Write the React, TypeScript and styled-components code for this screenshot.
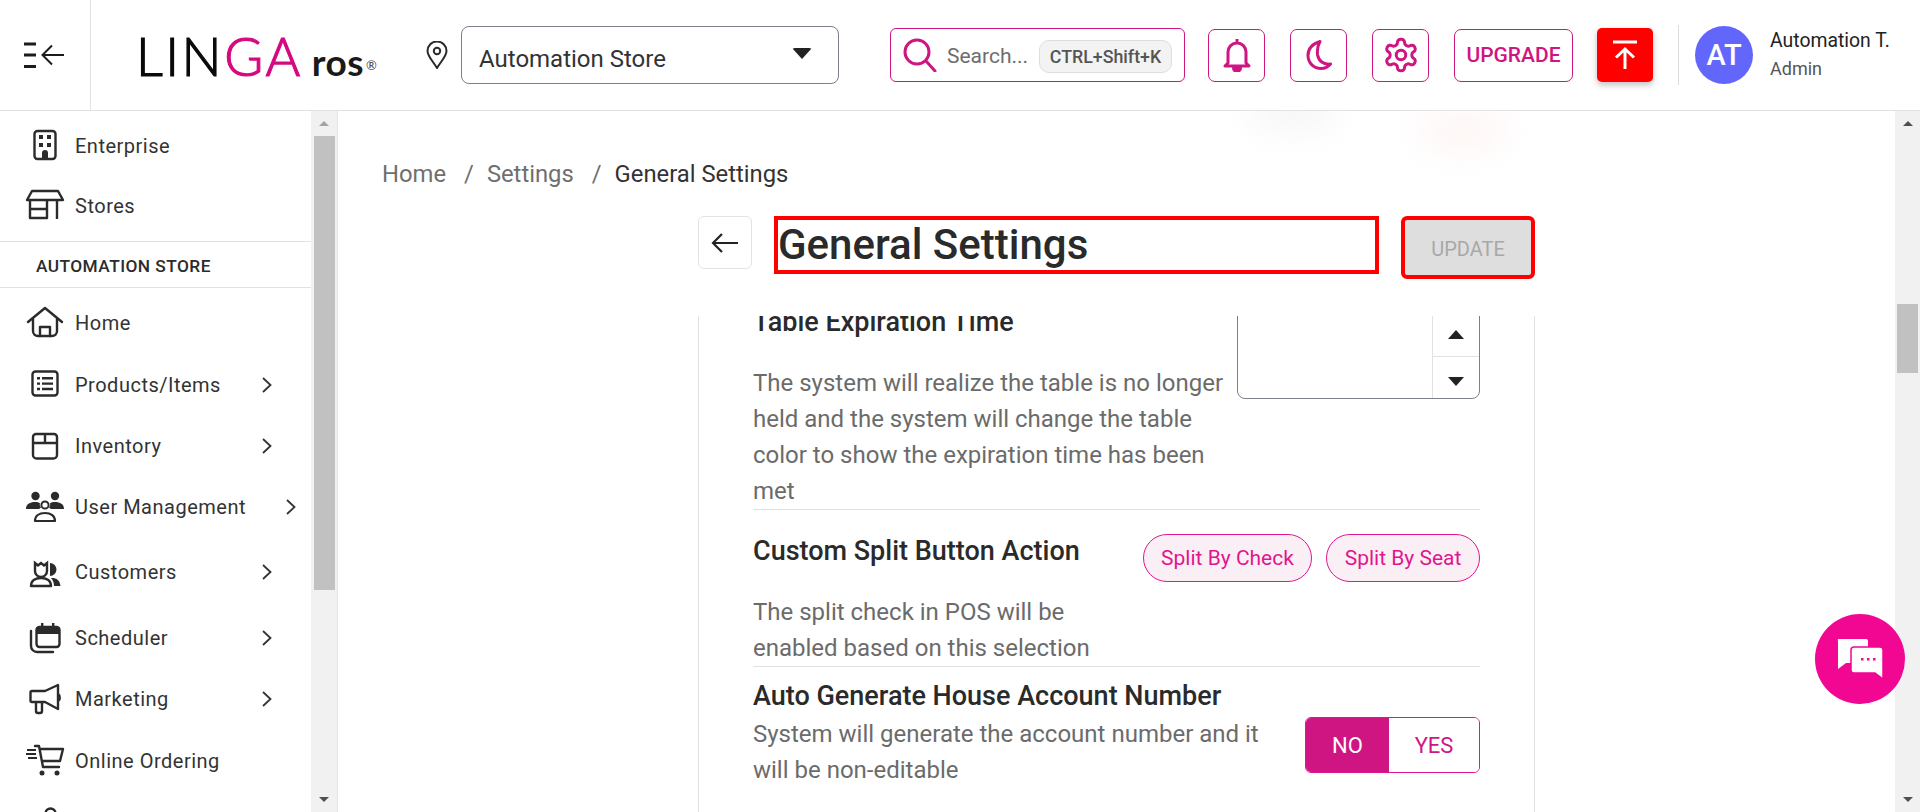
import { ReactElement, ReactNode } from 'react'
import styled, { createGlobalStyle } from 'styled-components'

const pink = '#cf1582'

const GlobalStyle = createGlobalStyle`
  html, body {
    margin: 0;
    height: 100%;
    overflow: hidden;
    background: #fff;
    font-family: Roboto, "Liberation Sans", sans-serif;
    color: #222;
  }
  * { box-sizing: border-box; }
`

const Page = styled.div`
  width: 1920px;
  height: 812px;
  display: flex;
  flex-direction: column;
  overflow: hidden;
`

const Header = styled.header`
  flex: none;
  height: 111px;
  display: flex;
  align-items: center;
  border-bottom: 1px solid #e2e2e2;
  background: #fff;
`

const MenuCell = styled.div`
  flex: none;
  width: 91px;
  height: 110px;
  border-right: 1px solid #e2e2e2;
  display: flex;
  align-items: center;
  padding-left: 24px;
`

const Logo = styled.div`
  flex: none;
  width: 290px;
  margin-left: 45px;
  display: flex;
  align-items: baseline;
  height: 54px;
  font-family: Lato, Roboto, sans-serif;
  line-height: 54px;
  margin-top: 2px;
`

const LogoWord = styled.span<{ $pink?: boolean }>`
  font-size: 53px;
  font-weight: 300;
  letter-spacing: 2.5px;
  color: ${p => (p.$pink ? '#d6097f' : '#0a0a0a')};
  -webkit-text-stroke: 1.2px currentColor;
`

const LogoRos = styled.span`
  font-size: 37px;
  font-weight: 700;
  margin-left: 9px;
  color: #1a1a1a;
  letter-spacing: 0.5px;
`

const LogoMark = styled.sup`
  font-size: 13px;
  line-height: 0;
  color: #444;
  margin-left: 2px;
  position: relative;
  top: -6px;
`

const PinIcon = styled.svg`
  flex: none;
  width: 22px;
  height: 28px;
  margin-right: 13px;
`

const StoreSelect = styled.div`
  flex: none;
  width: 378px;
  height: 58px;
  border: 1px solid #7c808c;
  border-radius: 8px;
  display: flex;
  align-items: center;
  justify-content: space-between;
  padding: 8px 26px 0 17px;
  font-size: 24px;
  color: #333;
`

const CaretDown = styled.span`
  width: 0;
  height: 0;
  margin-bottom: 12px;
  border-left: 10px solid transparent;
  border-right: 10px solid transparent;
  border-top: 11px solid #222;
  border-radius: 3px;
`

const SearchBox = styled.div`
  flex: none;
  width: 295px;
  height: 54px;
  margin-left: 51px;
  margin-right: 23px;
  border: 1px solid ${pink};
  border-radius: 6px;
  display: flex;
  align-items: center;
  padding-left: 12px;
  font-size: 21px;
  color: #6d6d6d;
`

const SearchText = styled.span`
  margin: 2px 0 0 10px;
  width: 92px;
  flex: none;
`

const Kbd = styled.span`
  flex: none;
  width: 133px;
  height: 33px;
  border: 1px solid #dedede;
  border-radius: 10px;
  background: #f3f3f3;
  display: flex;
  align-items: center;
  justify-content: center;
  font-size: 17.8px;
  font-weight: 500;
  color: #555;
  margin-top: 2px;
`

const HeadButton = styled.div<{ $w?: number }>`
  flex: none;
  width: ${p => p.$w ?? 57}px;
  height: 53px;
  margin-right: 25px;
  border: 1px solid ${pink};
  border-radius: 7px;
  color: ${pink};
  display: flex;
  align-items: center;
  justify-content: center;
  font-size: 21px;
  font-weight: 500;
`

const RedButton = styled.div`
  flex: none;
  width: 56px;
  height: 54px;
  margin-left: -1px;
  border-radius: 5px;
  background: #ff0000;
  box-shadow: 0 3px 6px rgba(0, 0, 0, 0.25);
  display: flex;
  align-items: center;
  justify-content: center;
`

const HeadDivider = styled.div`
  flex: none;
  width: 1px;
  height: 60px;
  margin: 0 16px 0 25px;
  background: #dcdcdc;
`

const Avatar = styled.div`
  flex: none;
  width: 58px;
  height: 58px;
  border-radius: 50%;
  background: #6366fb;
  color: #fff;
  display: flex;
  align-items: center;
  justify-content: center;
  font-size: 29px;
  font-weight: 500;
`

const UserBox = styled.div`
  margin-left: 17px;
  display: flex;
  flex-direction: column;
  gap: 4px;
`

const UserName = styled.div`
  font-size: 19.4px;
  line-height: 24px;
  color: #222;
`

const UserRole = styled.div`
  font-size: 18px;
  line-height: 24px;
  color: #555;
`

const Body = styled.div`
  flex: 1;
  min-height: 0;
  display: flex;
`

const Sidebar = styled.aside`
  flex: none;
  width: 338px;
  display: flex;
  border-right: 1px solid #e4e4e4;
`

const Nav = styled.nav`
  flex: none;
  width: 311px;
  padding-top: 5px;
  overflow: hidden;
`

const NavRow = styled.div<{ $h: number }>`
  height: ${p => p.$h}px;
  display: flex;
  align-items: center;
  padding-left: 25px;
  font-size: 20px;
  color: #333;
`

const NavIcon = styled.svg`
  flex: none;
  width: 40px;
  height: 40px;
  margin-right: 10px;
  color: #2b2b2b;
`

const NavLabel = styled.span<{ $wide?: boolean }>`
  flex: none;
  width: ${p => (p.$wide ? 210 : 186)}px;
  letter-spacing: 0.5px;
`

const NavSection = styled.div`
  height: 47px;
  margin-top: 5px;
  padding: 2px 0 0 36px;
  border-top: 1px solid #e2e2e2;
  border-bottom: 1px solid #e2e2e2;
  display: flex;
  align-items: center;
  font-size: 17.3px;
  font-weight: 500;
  letter-spacing: 0.45px;
  color: #2b2b2b;
`

const Track = styled.div<{ $w: number }>`
  flex: none;
  width: ${p => p.$w}px;
  display: flex;
  flex-direction: column;
  align-items: center;
  background: #f1f1f1;
`

const Arrow = styled.div<{ $h: number; $down?: boolean; $dim?: boolean }>`
  flex: none;
  height: ${p => p.$h}px;
  display: flex;
  align-items: center;
  justify-content: center;
  &::before {
    content: '';
    border-left: 5.5px solid transparent;
    border-right: 5.5px solid transparent;
    ${p => (p.$down ? 'border-top' : 'border-bottom')}: 5.5px solid ${p => (p.$dim ? '#a3a3a3' : '#505050')};
  }
`

const Thumb = styled.div<{ $h: number; $gap: number }>`
  flex: none;
  width: 21px;
  height: ${p => p.$h}px;
  margin-top: ${p => p.$gap}px;
  background: #c1c1c1;
`

const TrackFill = styled.div`
  flex: 1;
`

const Main = styled.main`
  flex: 1;
  min-width: 0;
  display: flex;
  flex-direction: column;
  position: relative;
  overflow: hidden;
  padding-top: 48px;
`

const Smudge = styled.div<{ $x: number; $y: number; $tint: string }>`
  position: absolute;
  left: ${p => p.$x}px;
  top: ${p => p.$y}px;
  width: 90px;
  height: 40px;
  border-radius: 50%;
  background: ${p => p.$tint};
  filter: blur(16px);
`

const Breadcrumb = styled.div`
  flex: none;
  height: 30px;
  padding-left: 44px;
  display: flex;
  align-items: center;
  font-size: 23.8px;
  color: #6f6f6f;
`

const Crumb = styled.span<{ $current?: boolean }>`
  color: ${p => (p.$current ? '#333' : '#6f6f6f')};
`

const CrumbSlash = styled.span`
  margin: 0 13px 0 18px;
`

const TitleBar = styled.div`
  flex: none;
  height: 100px;
  margin-top: 27px;
  padding-left: 360px;
  display: flex;
  align-items: flex-start;
`

const BackButton = styled.div`
  flex: none;
  width: 54px;
  height: 53px;
  margin-right: 22px;
  border: 1px solid #e3e3e3;
  border-radius: 6px;
  display: flex;
  align-items: center;
  justify-content: center;
`

const TitleBox = styled.h1`
  flex: none;
  width: 605px;
  height: 58px;
  margin: 0 22px 0 0;
  border: 4px solid #ff0000;
  font-size: 42px;
  line-height: 50px;
  font-weight: 500;
  color: #2a2a2a;
`

const UpdateButton = styled.div`
  flex: none;
  width: 134px;
  height: 63px;
  border: 4px solid #ff0000;
  border-radius: 6px;
  background: #dedede;
  color: #a8a8a8;
  font-size: 20px;
  display: flex;
  align-items: center;
  justify-content: center;
  padding-top: 2px;
`

const Card = styled.section`
  flex: 1;
  min-height: 0;
  width: 837px;
  margin-left: 360px;
  padding: 0 54px;
  border-left: 1px solid #e2e2e2;
  border-right: 1px solid #e2e2e2;
  overflow: hidden;
`

const SettingRow = styled.div<{ $clip?: number; $pad?: number; $last?: boolean }>`
  display: flex;
  justify-content: space-between;
  align-items: flex-start;
  margin-top: ${p => p.$clip ?? 0}px;
  padding-top: ${p => p.$pad ?? 0}px;
  border-bottom: ${p => (p.$last ? 'none' : '1px solid #e0e0e6')};
`

const SettingText = styled.div<{ $w: number }>`
  flex: none;
  width: ${p => p.$w}px;
`

const SettingTitle = styled.div<{ $gap?: number }>`
  font-size: 27px;
  line-height: 40px;
  font-weight: 500;
  color: #2a2a2a;
  margin-bottom: ${p => p.$gap ?? 0}px;
  white-space: nowrap;
`

const SettingHelp = styled.div`
  font-size: 24px;
  line-height: 36px;
  color: #6b6b6b;
`

const NumberInput = styled.div`
  flex: none;
  width: 243px;
  height: 97px;
  border: 1px solid #7c808c;
  border-radius: 0 0 8px 8px;
  display: flex;
  justify-content: flex-end;
`

const Spinner = styled.div`
  width: 47px;
  border-left: 1px solid #e2e2e2;
  display: flex;
  flex-direction: column;
`

const SpinStep = styled.div<{ $down?: boolean }>`
  flex: none;
  height: ${p => (p.$down ? 43 : 53)}px;
  display: flex;
  align-items: center;
  justify-content: center;
  padding-top: ${p => (p.$down ? 6 : 10)}px;
  ${p => (p.$down ? 'border-top: 1px solid #e2e2e2;' : '')}
  &::before {
    content: '';
    border-left: 8px solid transparent;
    border-right: 8px solid transparent;
    ${p => (p.$down ? 'border-top' : 'border-bottom')}: 9px solid #222;
  }
`

const PillGroup = styled.div`
  display: flex;
  gap: 14px;
  margin-top: 3px;
`

const Pill = styled.div<{ $w: number }>`
  width: ${p => p.$w}px;
  height: 48px;
  border: 1px solid #e0168e;
  border-radius: 24px;
  background: #fbeff6;
  color: #e0168e;
  font-size: 21px;
  display: flex;
  align-items: center;
  justify-content: center;
`

const Toggle = styled.div`
  flex: none;
  display: flex;
  width: 175px;
  height: 56px;
  margin-top: 41px;
  border: 1px solid #e0168e;
  border-radius: 6px;
  overflow: hidden;
`

const ToggleOption = styled.div<{ $on?: boolean; $w: number }>`
  width: ${p => p.$w}px;
  background: ${p => (p.$on ? pink : '#fff')};
  color: ${p => (p.$on ? '#fff' : pink)};
  font-size: 22px;
  display: flex;
  align-items: center;
  justify-content: center;
`

const ChatButton = styled.div`
  position: absolute;
  left: 1815px;
  top: 614px;
  width: 90px;
  height: 90px;
  border-radius: 50%;
  background: #f10791;
  display: flex;
  align-items: center;
  justify-content: center;
`

const icons: Record<string, ReactNode> = {
  enterprise: (
    <>
      <rect x="9.5" y="5" width="21" height="28" rx="3" fill="none" stroke="currentColor" strokeWidth="2.4" />
      <path d="M14 9h4v4h-4zM22 9h4v4h-4zM14 17h4v4h-4zM22 17h4v4h-4zM17 33v-6a3 3 0 0 1 6 0v6z" fill="currentColor" />
    </>
  ),
  stores: (
    <g fill="none" stroke="currentColor" strokeWidth="2.4" strokeLinejoin="round">
      <path d="M7 5h26l5 9H2z" />
      <path d="M5 14v18h17V14M5 23h17M32 14v19" />
    </g>
  ),
  home: (
    <g fill="none" stroke="currentColor" strokeWidth="2.4" strokeLinecap="round" strokeLinejoin="round">
      <path d="M3 19 20 5l17 14" />
      <path d="M8 16v12a5 5 0 0 0 5 5h14a5 5 0 0 0 5-5V16" />
      <path d="M15 33v-9h10v9" />
    </g>
  ),
  products: (
    <>
      <rect x="7.5" y="6.5" width="25" height="24" rx="3" fill="none" stroke="currentColor" strokeWidth="2.4" />
      <path d="M12 12h3v2.4h-3zM17 12h11v2.4H17zM12 17.4h3v2.4h-3zM17 17.4h11v2.4H17zM12 22.8h3v2.4h-3zM17 22.8h11v2.4H17z" fill="currentColor" />
    </>
  ),
  inventory: (
    <g fill="none" stroke="currentColor" strokeWidth="2.4" strokeLinejoin="round">
      <path d="M11 8h18a3 3 0 0 1 3 3v18a3.500 3.500 0 0 1-3.500 3.500h-17A3.500 3.500 0 0 1 8 29V11a3 3 0 0 1 3-3z" />
      <path d="M8 17h24M20 8v9" />
    </g>
  ),
  users: (
    <>
      <circle cx="10.500" cy="9" r="4.200" fill="currentColor" />
      <circle cx="30" cy="9" r="4.200" fill="currentColor" />
      <path d="M1 22c0-5 4-7 9-7 2 0 4 .4 5 1.200-.6 1.500 0 3 1 4.300L14 22zM39 22c0-5-4-7-9-7-2 0-4 .4-5 1.200.6 1.500 0 3-1 4.300l2 1.500z" fill="currentColor" />
      <circle cx="20" cy="18" r="3.600" fill="none" stroke="currentColor" strokeWidth="2" />
      <path d="M10 34c0-5 4-8 10-8s10 3 10 8z" fill="none" stroke="currentColor" strokeWidth="2.200" strokeLinejoin="round" />
    </>
  ),
  customers: (
    <>
      <path d="M10 11l3 2.500 3-2.500 3 2.500 3-2.500v8a6 6 0 0 1-12 0z" fill="none" stroke="currentColor" strokeWidth="2.400" />
      <path d="M25 11a6 6 0 0 1 0 13z" fill="currentColor" />
      <path d="M6 34c0-6 5-8 10-8s10 2 10 8z" fill="none" stroke="currentColor" strokeWidth="2.400" strokeLinejoin="round" />
      <path d="M26 26c5-.5 9 2 9.500 8H29c0-3-1-6-3-8z" fill="currentColor" />
    </>
  ),
  scheduler: (
    <>
      <path d="M6 13v15a6 6 0 0 0 6 6h16" fill="none" stroke="currentColor" strokeWidth="2.400" strokeLinecap="round" />
      <rect x="11.500" y="9" width="23" height="20" rx="3" fill="none" stroke="currentColor" strokeWidth="2.400" />
      <path d="M11.500 9h23v7h-23zM16 5h2.400v5H16zM27 5h2.400v5H27z" fill="currentColor" />
    </>
  ),
  marketing: (
    <g fill="none" stroke="currentColor" strokeWidth="2.400" strokeLinejoin="round">
      <path d="M7 12h13l13-6v24l-13-7H7a1.500 1.500 0 0 1-1.500-1.500v-8A1.500 1.500 0 0 1 7 12z" />
      <path d="M11 23v9a2 2 0 0 0 2 2h2a2 2 0 0 0 2-2v-9M33 15.500c2 .5 2.500 5.500 0 6" />
    </g>
  ),
  online: (
    <>
      <g fill="none" stroke="currentColor" strokeWidth="2.400" strokeLinecap="round" strokeLinejoin="round">
        <path d="M10 5h4l4 21h16M15 8h23l-3 12H17" />
      </g>
      <path d="M2 8h9v2H2zM1 12h10v2H1zM3 16h9v2H3z" fill="currentColor" />
      <circle cx="17" cy="32" r="2.500" fill="currentColor" />
      <circle cx="32" cy="32" r="2.500" fill="currentColor" />
    </>
  ),
  tools: (
    <path d="M22 14a5 5 0 1 1 7 0" fill="none" stroke="currentColor" strokeWidth="2.400" />
  ),
}

const navTop = [
  { icon: 'enterprise', label: 'Enterprise', h: 60 },
  { icon: 'stores', label: 'Stores', h: 60 },
]

const navStore = [
  { icon: 'home', label: 'Home', h: 70 },
  { icon: 'products', label: 'Products/Items', h: 54, more: true },
  { icon: 'inventory', label: 'Inventory', h: 68, more: true },
  { icon: 'users', label: 'User Management', h: 54, more: true, wide: true },
  { icon: 'customers', label: 'Customers', h: 76, more: true },
  { icon: 'scheduler', label: 'Scheduler', h: 56, more: true },
  { icon: 'marketing', label: 'Marketing', h: 66, more: true },
  { icon: 'online', label: 'Online Ordering', h: 58 },
  { icon: 'tools', label: '', h: 66 },
]

function NavItem({ icon, label, h, more, wide }: { icon: string; label: string; h: number; more?: boolean; wide?: boolean }): ReactElement {
  return (
    <NavRow $h={h}>
      <NavIcon viewBox="0 0 40 40">{icons[icon]}</NavIcon>
      <NavLabel $wide={wide}>{label}</NavLabel>
      {more && (
        <svg width="12" height="18" viewBox="0 0 12 18" fill="none" stroke="#333" strokeWidth="1.800">
          <path d="M2 2l7.500 7L2 16" />
        </svg>
      )}
    </NavRow>
  )
}

export default function App(): ReactElement {
  return (
    <Page>
      <GlobalStyle />
      <Header>
        <MenuCell>
          <svg width="41" height="28" viewBox="0 0 41 28" fill="none" stroke="#1c1c1c">
            <path d="M0 3h12M0 14h12M0 25.500h12" strokeWidth="3" />
            <path d="M40 14H19M28 4.500 18.500 14l9.500 9.500" strokeWidth="2" />
          </svg>
        </MenuCell>
        <Logo>
          <LogoWord>LIN</LogoWord>
          <LogoWord $pink>GA</LogoWord>
          <LogoRos>ros</LogoRos>
          <LogoMark>®</LogoMark>
        </Logo>
        <PinIcon viewBox="0 0 22 28" fill="none" stroke="#2a2a2a" strokeWidth="2">
          <path d="M11 27C6 19 1.500 15 1.500 10a9.500 9.500 0 0 1 19 0C20.500 15 16 19 11 27z" />
          <circle cx="11" cy="10" r="3.200" />
        </PinIcon>
        <StoreSelect>
          Automation Store
          <CaretDown />
        </StoreSelect>
        <SearchBox>
          <svg width="34" height="34" viewBox="0 0 34 34" fill="none" stroke={pink} strokeWidth="3" strokeLinecap="round">
            <circle cx="14" cy="14" r="12" />
            <path d="M23 23l9 10" />
          </svg>
          <SearchText>Search...</SearchText>
          <Kbd>CTRL+Shift+K</Kbd>
        </SearchBox>
        <HeadButton>
          <svg width="30" height="34" viewBox="0 0 30 34" fill="none" stroke={pink} strokeWidth="3" strokeLinejoin="round">
            <path d="M15 1v4M6 25V14a9 9 0 0 1 18 0v11l3 3H3z" />
            <path d="M11.500 30a3.500 3.500 0 0 0 7 0z" fill={pink} />
          </svg>
        </HeadButton>
        <HeadButton>
          <svg width="28" height="30" viewBox="0 0 28 30" fill="none" stroke={pink} strokeWidth="3" strokeLinejoin="round">
            <path d="M15 1.500C7 4 3 9 3 15.500 3 23 9 28.500 16 28.500c4 0 7-1.500 9.500-4.500-7 1-12-3-13-9.500C12 9.500 13 5 15 1.500z" />
          </svg>
        </HeadButton>
        <HeadButton>
          <svg width="38" height="38" viewBox="0 0 24 24" fill="none" stroke={pink} strokeWidth="1.900" strokeLinecap="round" strokeLinejoin="round">
            <path d="M12.220 2h-.44a2 2 0 0 0-2 2v.18a2 2 0 0 1-1 1.730l-.43.250a2 2 0 0 1-2 0l-.15-.080a2 2 0 0 0-2.730.730l-.22.380a2 2 0 0 0 .730 2.730l.15.100a2 2 0 0 1 1 1.720v.510a2 2 0 0 1-1 1.740l-.15.090a2 2 0 0 0-.730 2.730l.22.380a2 2 0 0 0 2.730.730l.15-.080a2 2 0 0 1 2 0l.43.250a2 2 0 0 1 1 1.730V20a2 2 0 0 0 2 2h.44a2 2 0 0 0 2-2v-.18a2 2 0 0 1 1-1.730l.43-.250a2 2 0 0 1 2 0l.15.080a2 2 0 0 0 2.730-.730l.22-.390a2 2 0 0 0-.730-2.730l-.15-.080a2 2 0 0 1-1-1.740v-.500a2 2 0 0 1 1-1.740l.15-.090a2 2 0 0 0 .730-2.730l-.22-.380a2 2 0 0 0-2.730-.730l-.15.080a2 2 0 0 1-2 0l-.43-.250a2 2 0 0 1-1-1.730V4a2 2 0 0 0-2-2z" />
            <circle cx="12" cy="12" r="3" />
          </svg>
        </HeadButton>
        <HeadButton $w={119}>UPGRADE</HeadButton>
        <RedButton>
          <svg width="26" height="30" viewBox="0 0 26 30" fill="none" stroke="#fff" strokeWidth="3">
            <path d="M1 2h24M13 29V9M4 17.500 13 9l9 8.500" />
          </svg>
        </RedButton>
        <HeadDivider />
        <Avatar>AT</Avatar>
        <UserBox>
          <UserName>Automation T.</UserName>
          <UserRole>Admin</UserRole>
        </UserBox>
      </Header>
      <Body>
        <Sidebar>
          <Nav>
            {navTop.map(item => (
              <NavItem key={item.icon} {...item} />
            ))}
            <NavSection>AUTOMATION STORE</NavSection>
            {navStore.map(item => (
              <NavItem key={item.icon} {...item} />
            ))}
          </Nav>
          <Track $w={26}>
            <Arrow $h={25} $dim />
            <Thumb $h={454} $gap={0} />
            <TrackFill />
            <Arrow $h={26} $down />
          </Track>
        </Sidebar>
        <Main>
          <Smudge $x={910} $y={-20} $tint="#f6f6f6" />
          <Smudge $x={1080} $y={0} $tint="#fdf6f4" />
          <Breadcrumb>
            <Crumb>Home</Crumb>
            <CrumbSlash>/</CrumbSlash>
            <Crumb>Settings</Crumb>
            <CrumbSlash>/</CrumbSlash>
            <Crumb $current>General Settings</Crumb>
          </Breadcrumb>
          <TitleBar>
            <BackButton>
              <svg width="28" height="22" viewBox="0 0 28 22" fill="none" stroke="#222" strokeWidth="2.200">
                <path d="M27 11H2M11 2l-9 9 9 9" />
              </svg>
            </BackButton>
            <TitleBox>General Settings</TitleBox>
            <UpdateButton>UPDATE</UpdateButton>
          </TitleBar>
          <Card>
            <SettingRow $clip={-14}>
              <SettingText $w={480}>
                <SettingTitle $gap={23}>Table Expiration Time</SettingTitle>
                <SettingHelp>The system will realize the table is no longer held and the system will change the table color to show the expiration time has been met</SettingHelp>
              </SettingText>
              <NumberInput>
                <Spinner>
                  <SpinStep />
                  <SpinStep $down />
                </Spinner>
              </NumberInput>
            </SettingRow>
            <SettingRow $pad={21}>
              <SettingText $w={370}>
                <SettingTitle $gap={23}>Custom Split Button Action</SettingTitle>
                <SettingHelp>The split check in POS will be enabled based on this selection</SettingHelp>
              </SettingText>
              <PillGroup>
                <Pill $w={169}>Split By Check</Pill>
                <Pill $w={154}>Split By Seat</Pill>
              </PillGroup>
            </SettingRow>
            <SettingRow $pad={9} $last>
              <SettingText $w={520}>
                <SettingTitle>Auto Generate House Account Number</SettingTitle>
                <SettingHelp>System will generate the account number and it will be non-editable</SettingHelp>
              </SettingText>
              <Toggle>
                <ToggleOption $on $w={84}>NO</ToggleOption>
                <ToggleOption $w={91}>YES</ToggleOption>
              </Toggle>
            </SettingRow>
          </Card>
        </Main>
        <Track $w={25}>
          <Arrow $h={25} />
          <Thumb $h={69} $gap={168} />
          <TrackFill />
          <Arrow $h={26} $down />
        </Track>
      </Body>
      <ChatButton>
        <svg width="48" height="42" viewBox="0 0 48 42">
          <path d="M2 1h28a2 2 0 0 1 2 2v22H10l-8 6V3a2 2 0 0 1 0-2z" fill="#fff" />
          <path d="M18 9h26a3 3 0 0 1 3 3v29l-8-6H18a3 3 0 0 1-3-3V12a3 3 0 0 1 3-3z" fill="#fff" stroke="#f10791" strokeWidth="1.500" />
          <path d="M25 20h2.500v2.500H25zM31 20h2.500v2.500H31zM37 20h2.500v2.500H37z" fill="#f10791" />
        </svg>
      </ChatButton>
    </Page>
  )
}
